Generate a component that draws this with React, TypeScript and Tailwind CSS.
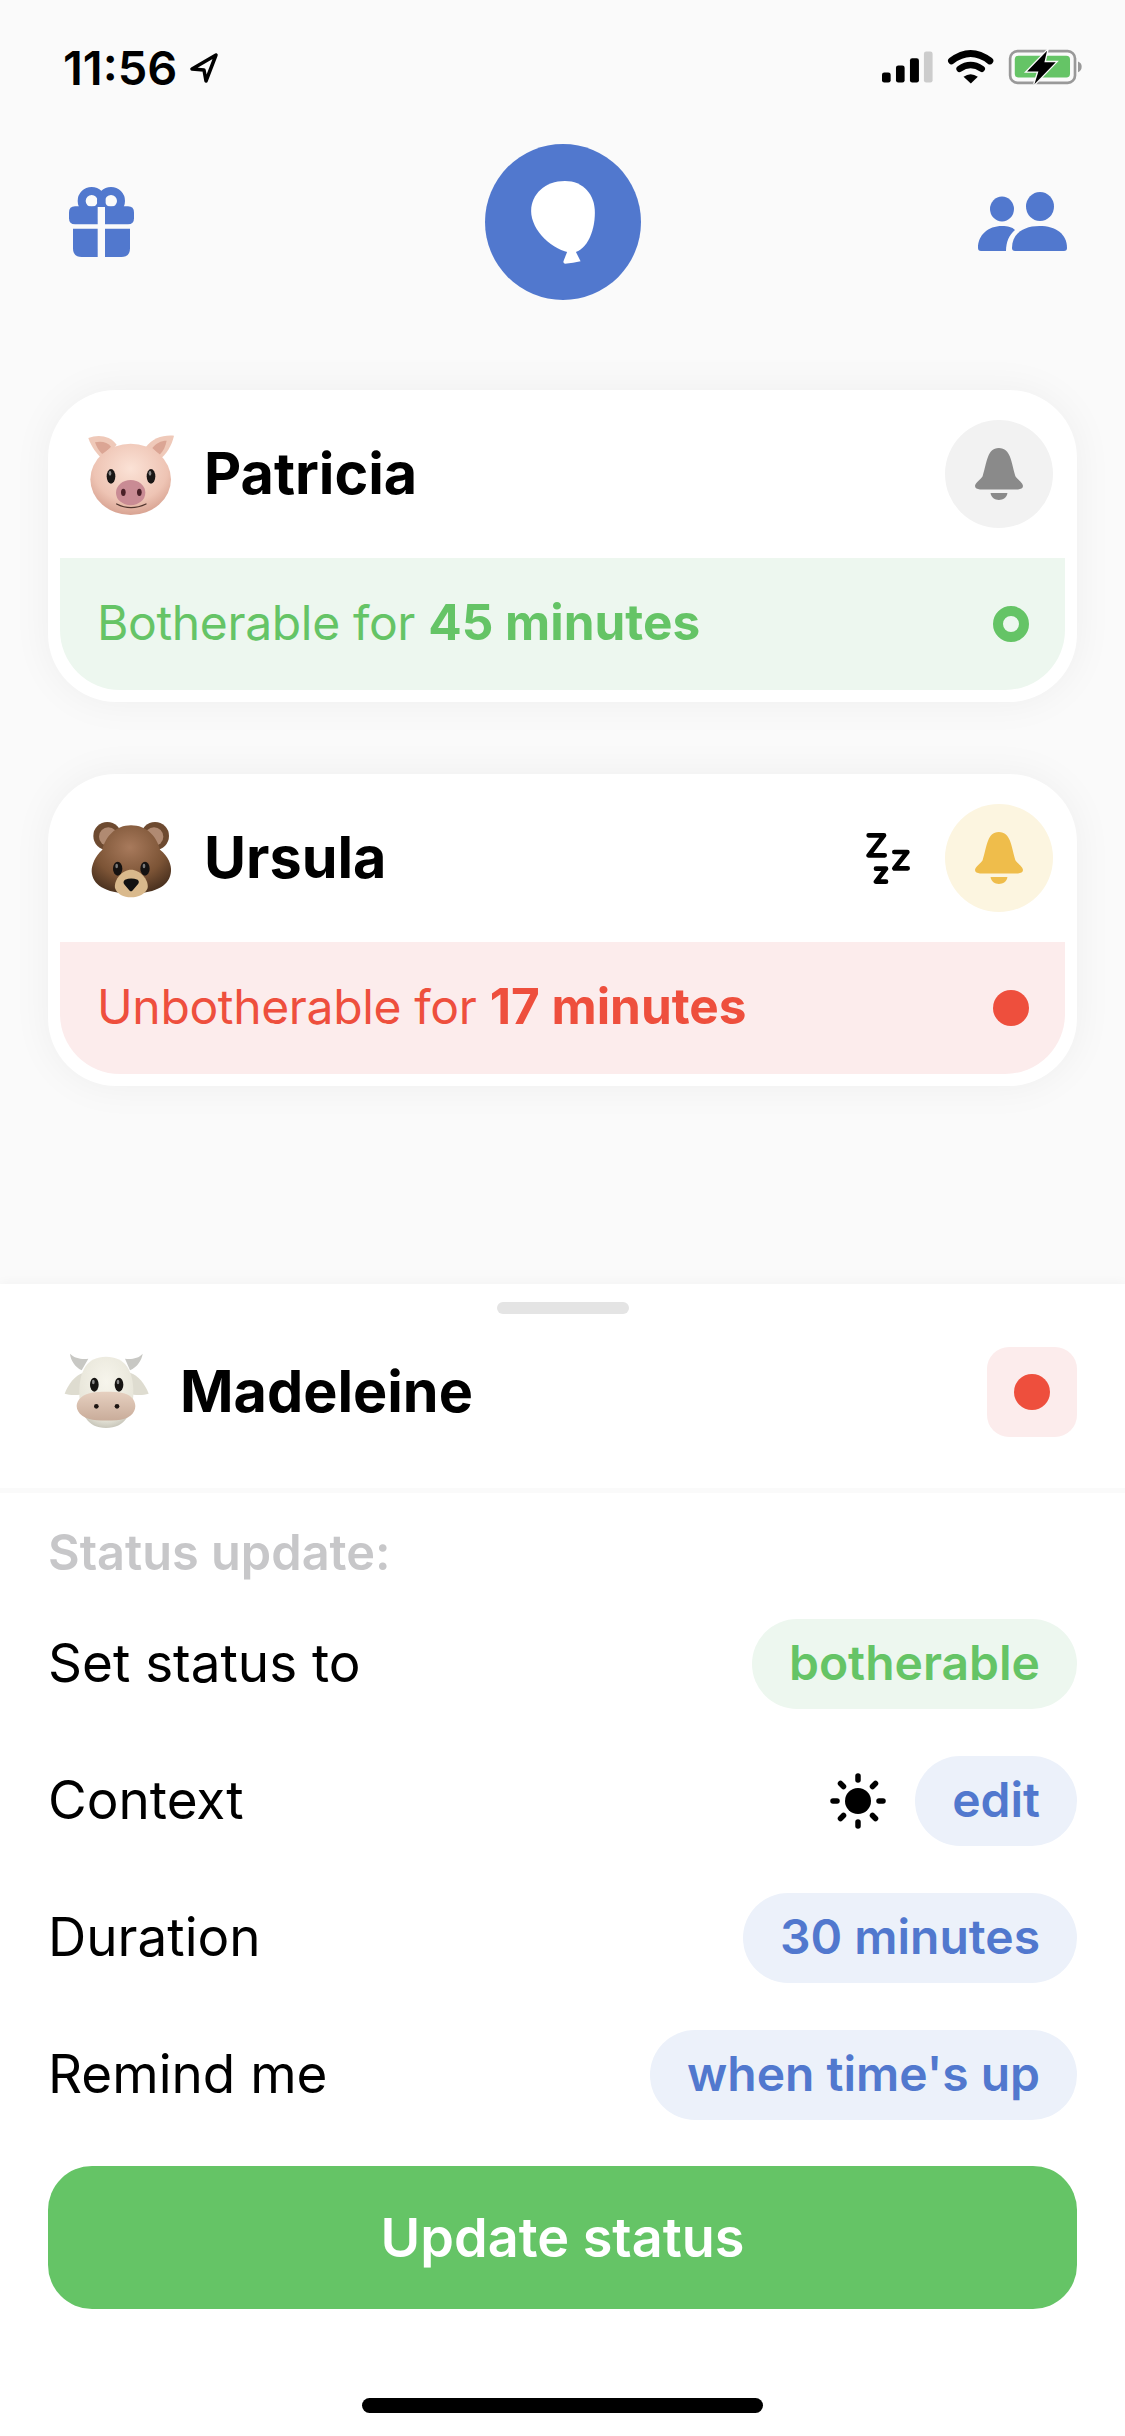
import React from "react";

const Bell = ({ color }: { color: string }) => (
  <svg width="48" height="52" viewBox="0 0 145 157" fill={color}>
    <path d="M72 0C90 0 100 12 105 25C112 42 117 70 122 85C128 95 145 105 145 115C145 122 138 125 130 125L15 125C7 125 0 122 0 115C0 105 17 95 23 85C28 70 33 42 40 25C45 12 54 0 72 0Z" />
    <path d="M47 136L98 136C96 150 85 157 72 157C60 157 49 150 47 136Z" />
  </svg>
);

const StatusIcons = () => (
  <svg width="203" height="37" viewBox="180 60 610 110">
    <rect x="186" y="133" width="26" height="30" rx="7" fill="#000" />
    <rect x="228" y="112" width="26" height="51" rx="7" fill="#000" />
    <rect x="270" y="90" width="27" height="73" rx="7" fill="#000" />
    <rect x="312" y="70" width="26" height="93" rx="7" fill="#ccc" />
    <path d="M395 98Q452 54 510 98" fill="none" stroke="#000" strokeWidth="21" strokeLinecap="round" />
    <path d="M419 122Q452 99 486 122" fill="none" stroke="#000" strokeWidth="19" strokeLinecap="round" />
    <path d="M431 146Q452 130 474 146L453 166Z" fill="#000" />
    <rect x="571" y="69" width="195" height="95" rx="22" fill="none" stroke="#999" strokeWidth="8" />
    <path d="M775 100C783 103 786 108 786 116C786 124 783 129 775 132Z" fill="#999" />
    <rect x="585" y="83" width="166" height="65" rx="11" fill="#65C466" />
    <path d="M682 68L622 130L656 130L644 168L708 102L674 102Z" fill="#000" stroke="#fafafa" strokeWidth="8" paintOrder="stroke" />
  </svg>
);

const Pig = () => (
  <svg width="110" height="100" viewBox="0 0 330 300" className="shrink-0">
    <defs>
      <radialGradient id="pigHead" cx="50%" cy="35%" r="65%">
        <stop offset="0%" stopColor="#fbe2d6" />
        <stop offset="70%" stopColor="#eec4b4" />
        <stop offset="100%" stopColor="#d8a392" />
      </radialGradient>
    </defs>
    <path d="M40 42C70 30 105 35 125 62L85 108C65 90 50 70 40 42Z" fill="#efc9b9" />
    <path d="M60 55C80 50 98 55 108 68L84 92C72 82 65 70 60 55Z" fill="#dba594" />
    <path d="M297 35C265 32 232 42 212 70L252 108C275 90 290 65 297 35Z" fill="#efc9b9" />
    <path d="M275 50C258 50 242 58 232 72L254 92C265 82 272 65 275 50Z" fill="#dba594" />
    <ellipse cx="167" cy="166" rx="121" ry="107" fill="url(#pigHead)" />
    <ellipse cx="108" cy="157" rx="13" ry="22" fill="#1a1716" />
    <ellipse cx="228" cy="157" rx="13" ry="22" fill="#1a1716" />
    <ellipse cx="105" cy="148" rx="4" ry="7" fill="#8a8a8a" />
    <ellipse cx="225" cy="148" rx="4" ry="7" fill="#8a8a8a" />
    <ellipse cx="167" cy="206" rx="44" ry="38" fill="#c98b94" />
    <ellipse cx="145" cy="205" rx="7" ry="11" fill="#4a2028" />
    <ellipse cx="193" cy="205" rx="7" ry="11" fill="#4a2028" />
    <path d="M125 240Q167 262 213 240" fill="none" stroke="#50352d" strokeWidth="4" strokeLinecap="round" />
  </svg>
);

const Bear = () => (
  <svg width="110" height="100" viewBox="0 0 330 300" className="shrink-0">
    <defs>
      <radialGradient id="bearHead" cx="48%" cy="32%" r="68%">
        <stop offset="0%" stopColor="#a87a5c" />
        <stop offset="65%" stopColor="#7c5436" />
        <stop offset="100%" stopColor="#4d3320" />
      </radialGradient>
    </defs>
    <circle cx="97" cy="84" r="42" fill="#6d4a30" />
    <circle cx="240" cy="84" r="42" fill="#6d4a30" />
    <circle cx="100" cy="86" r="28" fill="#b08a72" />
    <circle cx="237" cy="86" r="28" fill="#b08a72" />
    <path d="M168 52C215 52 245 85 255 125C280 145 290 170 288 190C285 230 250 255 168 258C88 255 52 230 50 190C50 170 60 145 82 125C92 85 122 52 168 52Z" fill="url(#bearHead)" />
    <path d="M168 185C195 185 222 215 218 240C212 258 190 268 168 268C146 268 125 258 120 240C116 215 142 185 168 185Z" fill="#d9b98c" />
    <ellipse cx="128" cy="182" rx="14" ry="21" fill="#151211" />
    <ellipse cx="210" cy="182" rx="14" ry="21" fill="#151211" />
    <ellipse cx="125" cy="174" rx="4" ry="7" fill="#7a7a7a" />
    <ellipse cx="207" cy="174" rx="4" ry="7" fill="#7a7a7a" />
    <path d="M150 215Q168 208 188 215Q196 222 186 232L172 248Q168 251 164 248L150 232Q141 222 150 215Z" fill="#111" />
  </svg>
);

const Cow = () => (
  <svg width="110" height="100" viewBox="0 0 330 300" className="shrink-0">
    <defs>
      <linearGradient id="cowSnout" x1="0" y1="0" x2="0" y2="1">
        <stop offset="0%" stopColor="#e6d0c0" />
        <stop offset="100%" stopColor="#c9ac9a" />
      </linearGradient>
      <radialGradient id="cowHead" cx="50%" cy="35%" r="70%">
        <stop offset="0%" stopColor="#f7f5ec" />
        <stop offset="75%" stopColor="#e8e6da" />
        <stop offset="100%" stopColor="#bdbbaf" />
      </radialGradient>
    </defs>
    <path d="M60 35C75 50 95 52 115 50L95 85C75 75 62 55 60 35Z" fill="#c8c8c4" />
    <path d="M278 35C265 50 245 52 225 50L240 85C262 75 275 55 278 35Z" fill="#c8c8c4" />
    <path d="M44 155C55 125 75 100 100 92L105 155C85 160 60 160 44 155Z" fill="#dedcd0" />
    <path d="M296 155C285 125 265 100 240 92L235 155C255 160 280 160 296 155Z" fill="#dedcd0" />
    <path d="M168 44C225 44 250 85 250 150C250 215 225 258 168 258C112 258 88 215 88 150C88 85 112 44 168 44Z" fill="url(#cowHead)" />
    <ellipse cx="133" cy="128" rx="13" ry="21" fill="#161412" />
    <ellipse cx="207" cy="128" rx="13" ry="21" fill="#161412" />
    <ellipse cx="130" cy="120" rx="4" ry="7" fill="#8a8a8a" />
    <ellipse cx="204" cy="120" rx="4" ry="7" fill="#8a8a8a" />
    <path d="M125 152C150 148 190 148 215 152C240 156 256 172 256 192C256 215 235 232 200 235C180 236 160 236 140 235C105 232 80 215 80 192C80 172 100 156 125 152Z" fill="url(#cowSnout)" />
    <circle cx="139" cy="193" r="7" fill="#1d1512" />
    <circle cx="201" cy="193" r="7" fill="#1d1512" />
  </svg>
);

const Zzz = () => (
  <svg width="44" height="51" viewBox="48 95 132 153" fill="none" stroke="#000" strokeWidth="14" strokeLinecap="round" strokeLinejoin="round">
    <path d="M56 102H102L56 162H104" />
    <path d="M133 152H172L133 201H173" />
    <path d="M78 202H108L78 241H108" />
  </svg>
);

const Sun = () => (
  <svg width="56" height="56" viewBox="0 0 56 56" className="shrink-0">
    <circle cx="28" cy="28" r="13" fill="#000" />
    <g stroke="#000" strokeWidth="5.5" strokeLinecap="round">
      <path d="M28 3V7" />
      <path d="M28 49V53" />
      <path d="M3 28H7" />
      <path d="M49 28H53" />
      <path d="M10.5 10.5L13.5 13.5" />
      <path d="M42.5 42.5L45.5 45.5" />
      <path d="M10.5 45.5L13.5 42.5" />
      <path d="M42.5 13.5L45.5 10.5" />
    </g>
  </svg>
);

const Gift = () => (
  <svg width="65" height="70" viewBox="87 80 195 210" fill="#5178CE">
    <defs>
      <clipPath id="bow"><rect x="87" y="70" width="195" height="70" /></clipPath>
    </defs>
    <g clipPath="url(#bow)" fill="none" stroke="#5178CE" strokeWidth="24">
      <circle cx="155" cy="122" r="30" />
      <circle cx="213" cy="122" r="30" />
    </g>
    <path d="M105 138H173V192H105Q87 192 87 174V156Q87 138 105 138Z" />
    <path d="M195 138H264Q282 138 282 156V174Q282 192 264 192H195Z" />
    <path d="M99 205H173V290H125Q99 290 99 264Z" />
    <path d="M195 205H270V264Q270 290 244 290H195Z" />
  </svg>
);

const People = () => (
  <svg width="90" height="60" viewBox="0 0 90 60" fill="#5178CE">
    <ellipse cx="62" cy="14.5" rx="14" ry="14.5" />
    <path d="M34 56C34 42 45 34 61.5 34C78 34 89 42 89 56Q89 59 86 59H37Q34 59 34 56Z" />
    <ellipse cx="24" cy="17" rx="12" ry="12.5" />
    <path d="M0 56C0 43 10 34 24 34C30 34 34 35 37 38C31 43 28 50 28 59H3Q0 59 0 56Z" />
  </svg>
);

const Balloon = () => (
  <svg width="64" height="83" viewBox="183 150 192 250" fill="#fff">
    <path d="M285 150C340 150 375 190 375 245C375 310 345 365 305 366C250 360 183 300 183 240C183 190 225 150 285 150Z" />
    <path d="M292 362L316 360L332 392Q310 398 285 399Q278 398 281 390Z" />
  </svg>
);

const Card = ({ emoji, name, extra, bellBg, bellColor, stripBg, textColor, label, value, dot }: {
  emoji: React.ReactNode; name: string; extra?: React.ReactNode; bellBg: string; bellColor: string; stripBg: string; textColor: string; label: string; value: string; dot: React.ReactNode;
}) => (
  <div className="bg-white rounded-[68px] p-[12px] shadow-[0_0_40px_rgba(0,0,0,0.05)]">
    <div className="h-[156px] pb-[12px] pl-[15px] pr-[12px] flex items-center">
      {emoji}
      <span className="ml-[19px] text-[57.5px] leading-none font-bold text-black">{name}</span>
      <div className="ml-auto flex items-center">
        {extra}
        <div className={`w-[108px] h-[108px] rounded-full flex items-center justify-center ${bellBg}`}>
          <Bell color={bellColor} />
        </div>
      </div>
    </div>
    <div className={`h-[132px] rounded-b-[60px] flex items-center justify-between pl-[37px] pr-[36px] ${stripBg}`}>
      <span className={`text-[48px] leading-none tracking-[-0.35px] pb-[2px] ${textColor}`}>
        {label} <span className="font-bold text-[49.5px] tracking-normal">{value}</span>
      </span>
      {dot}
    </div>
  </div>
);

const Row = ({ label, children }: { label: string; children: React.ReactNode }) => (
  <div className="h-[90px] flex items-center justify-between">
    <span className="text-[53px] leading-none pb-[2px] text-black">{label}</span>
    <div className="flex items-center gap-[29px]">{children}</div>
  </div>
);

const Pill = ({ children, green }: { children: React.ReactNode; green?: boolean }) => (
  <div className={`h-[90px] px-[37px] pb-[3px] rounded-full flex items-center text-[48px] leading-none font-semibold ${green ? "bg-[#EDF7EF] text-[#65C466]" : "bg-[#ECF1FA] text-[#5178CE]"}`}>
    {children}
  </div>
);

export default function App() {
  return (
    <div className="w-[1125px] h-[2436px] bg-[#FAFAFA] flex flex-col overflow-hidden font-['Inter',sans-serif]">
      <div className="h-[144px] pt-[48px] pl-[63px] pr-[42px] flex items-start justify-between">
        <div className="flex items-center gap-[12px]">
          <span className="text-[47px] leading-[40px] font-semibold text-black">11:56</span>
          <svg width="30" height="32" viewBox="0 0 30 32" fill="none" stroke="#000" strokeWidth="3.5" strokeLinejoin="round">
            <path d="M27 3L3 17L15 18L17 29Z" />
          </svg>
        </div>
        <StatusIcons />
      </div>
      <div className="h-[156px] px-[57px] flex items-center">
        <div className="flex-1 flex justify-start"><div className="ml-[12px] flex"><Gift /></div></div>
        <div className="w-[156px] h-[156px] rounded-full bg-[#5178CE] flex items-center justify-center">
          <Balloon />
        </div>
        <div className="flex-1 flex justify-end"><People /></div>
      </div>
      <div className="mt-[90px] px-[48px] flex flex-col gap-[72px]">
        <Card
          emoji={<Pig />}
          name="Patricia"
          bellBg="bg-[#F2F2F2]"
          bellColor="#8A8A8A"
          stripBg="bg-[#EDF7EF]"
          textColor="text-[#65C466]"
          label="Botherable for"
          value="45 minutes"
          dot={<div className="w-[36px] h-[36px] rounded-full border-[10px] border-[#65C466]" />}
        />
        <Card
          emoji={<Bear />}
          name="Ursula"
          extra={<div className="mr-[35px] flex"><Zzz /></div>}
          bellBg="bg-[#FCF5E0]"
          bellColor="#EFBD4B"
          stripBg="bg-[#FCECEC]"
          textColor="text-[#EE4F3D]"
          label="Unbotherable for"
          value="17 minutes"
          dot={<div className="w-[36px] h-[36px] rounded-full bg-[#EE4F3D]" />}
        />
      </div>
      <div className="mt-auto h-[1152px] bg-white shadow-[0_-2px_10px_rgba(0,0,0,0.03)] flex flex-col">
        <div className="mt-[18px] mx-auto w-[132px] h-[12px] rounded-full bg-[#E4E4E4]" />
        <div className="mt-[33px] pl-[50px] pr-[48px] h-[90px] flex items-center">
          <Cow />
          <span className="ml-[20px] text-[57.5px] leading-none font-bold text-black">Madeleine</span>
          <div className="ml-auto w-[90px] h-[90px] rounded-[22px] bg-[#FCECEC] flex items-center justify-center">
            <div className="w-[36px] h-[36px] rounded-full bg-[#EE4F3D]" />
          </div>
        </div>
        <div className="mt-[51px] h-[5px] bg-[#FAFAFA]" />
        <div className="px-[48px] flex flex-col">
          <div className="mt-[30px] h-[60px] flex items-center text-[48.7px] leading-none font-semibold text-[#C7C7C9]">Status update:</div>
          <div className="mt-[36px] flex flex-col gap-[47px]">
            <Row label="Set status to"><Pill green>botherable</Pill></Row>
            <Row label="Context"><Sun /><Pill>edit</Pill></Row>
            <Row label="Duration"><Pill>30 minutes</Pill></Row>
            <Row label="Remind me"><Pill>when time's up</Pill></Row>
          </div>
          <div className="mt-[46px] h-[143px] rounded-[44px] bg-[#65C466] flex items-center justify-center text-[54px] leading-none font-semibold text-white">
            Update status
          </div>
          <div className="mt-[89px] mx-auto w-[401px] h-[15px] rounded-full bg-black" />
        </div>
      </div>
    </div>
  );
}
